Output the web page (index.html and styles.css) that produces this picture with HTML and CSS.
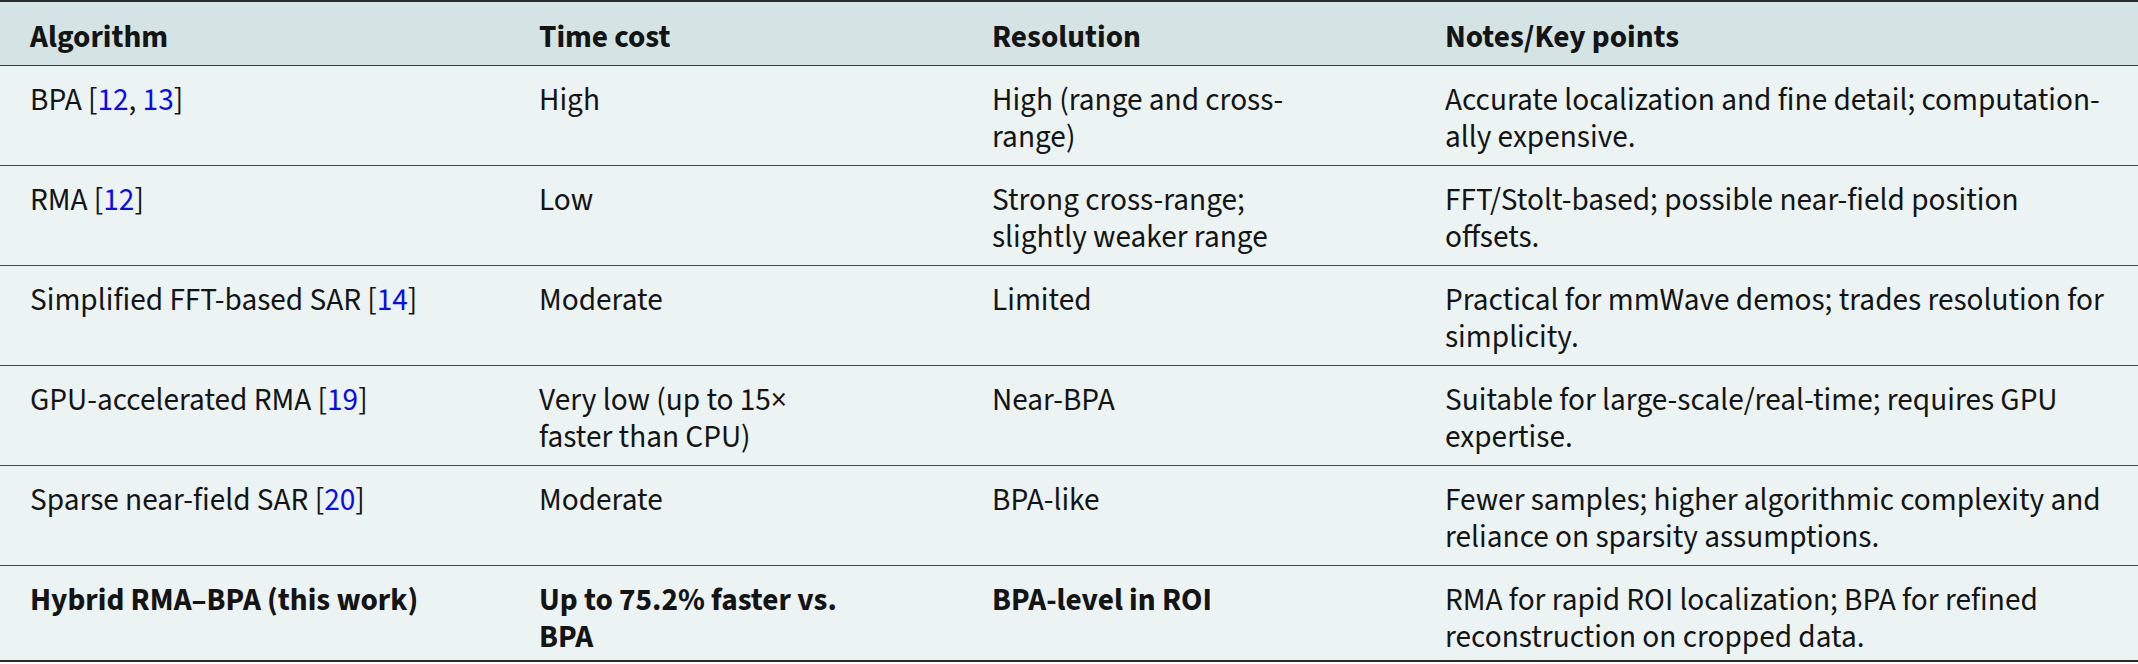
FILE: index.html
```html
<!DOCTYPE html>
<html lang="en">
<head>
<meta charset="utf-8">
<title>Comparison of SAR imaging algorithms</title>
<link rel="stylesheet" href="styles.css">
</head>
<body>
<table class="cmp">
  <colgroup>
    <col class="col-alg">
    <col class="col-time">
    <col class="col-res">
    <col class="col-notes">
  </colgroup>
  <thead>
    <tr>
      <th>Algorithm</th>
      <th>Time cost</th>
      <th>Resolution</th>
      <th>Notes/Key points</th>
    </tr>
  </thead>
  <tbody>
    <tr>
      <td>BPA [<a class="ref" href="#b12">12</a>, <a class="ref" href="#b13">13</a>]</td>
      <td>High</td>
      <td>High (range and cross-range)</td>
      <td>Accurate localization and fine detail; computation-ally expensive.</td>
    </tr>
    <tr>
      <td>RMA [<a class="ref" href="#b12">12</a>]</td>
      <td>Low</td>
      <td>Strong cross-range; slightly weaker range</td>
      <td>FFT/Stolt-based; possible near-field position offsets.</td>
    </tr>
    <tr>
      <td>Simplified FFT-based SAR [<a class="ref" href="#b14">14</a>]</td>
      <td>Moderate</td>
      <td>Limited</td>
      <td>Practical for mmWave demos; trades resolution for simplicity.</td>
    </tr>
    <tr>
      <td>GPU-accelerated RMA [<a class="ref" href="#b19">19</a>]</td>
      <td>Very low (up to 15&times; faster than CPU)</td>
      <td>Near-BPA</td>
      <td>Suitable for large-scale/real-time; requires GPU expertise.</td>
    </tr>
    <tr>
      <td>Sparse near-field SAR [<a class="ref" href="#b20">20</a>]</td>
      <td>Moderate</td>
      <td>BPA-like</td>
      <td>Fewer samples; higher algorithmic complexity and reliance on sparsity assumptions.</td>
    </tr>
    <tr class="ours">
      <td><strong>Hybrid RMA&ndash;BPA (this work)</strong></td>
      <td><strong>Up to 75.2% faster vs. BPA</strong></td>
      <td><strong>BPA-level in ROI</strong></td>
      <td>RMA for rapid ROI localization; BPA for refined reconstruction on cropped data.</td>
    </tr>
  </tbody>
</table>
</body>
</html>
```
FILE: styles.css
```css
html, body {
  margin: 0;
  padding: 0;
  background: #ffffff;
}

.cmp {
  width: 2138px;
  table-layout: fixed;
  border-collapse: separate;
  border-spacing: 0;
  font-family: "Source Sans 3", "Source Sans Pro", Lato, "Liberation Sans", sans-serif;
  font-size: 31.3px;
  line-height: 37px;
  color: #141414;
  background: #ebf3f3;
}

.col-alg { width: 509px; }
.col-time { width: 453px; }
.col-res { width: 453px; }
.col-notes { width: 723px; }

.cmp th,
.cmp td {
  text-align: left;
  vertical-align: top;
  padding: 16px 30px 9px 30px;
  border-bottom: 1px solid #4a4a4a;
}

.cmp th {
  font-weight: 700;
  background: #d4e4e4;
  padding-top: 17px;
  border-top: 2px solid #2a2a2a;
  border-bottom-color: #3a3a3a;
}

.cmp td {
  font-weight: 400;
}

.cmp th:nth-child(1),
.cmp td:nth-child(1) {
  padding-right: 60px;
}

.cmp th:nth-child(2),
.cmp td:nth-child(2) {
  padding-right: 110px;
}

.cmp th:nth-child(3),
.cmp td:nth-child(3) {
  padding-right: 93px;
}

.cmp .ours td {
  padding-bottom: 4px;
  border-bottom: 2px solid #2a2a2a;
}

.cmp strong {
  font-weight: 700;
}

.ref {
  color: #0a0aee;
  text-decoration: none;
}
```
